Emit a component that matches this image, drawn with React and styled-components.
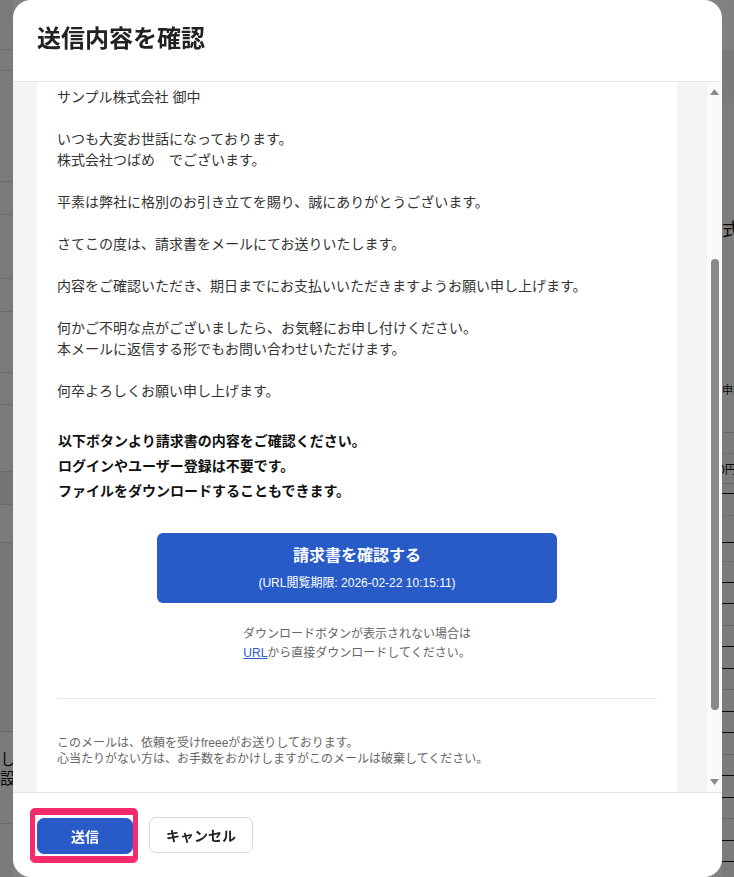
import React from "react";
import styled, { createGlobalStyle } from "styled-components";

const FONT = `"Liberation Sans", "Noto Sans CJK JP", "Noto Sans", sans-serif`;

const GlobalStyle = createGlobalStyle`
  * { box-sizing: border-box; }
  html, body { margin: 0; padding: 0; background: #f2f2f2; }
  body { font-family: ${FONT}; color: #333; overflow: hidden; }
`;

/* ---------- page behind the dialog ---------- */

const Page = styled.div`
  display: flex;
  width: 100%;
  height: 877px;
  background: #f2f2f2;
  overflow: hidden;
`;

const SideColumn = styled.div`
  width: ${(p) => p.$w}px;
  flex: none;
  display: flex;
  flex-direction: column;
`;

const MainColumn = styled.div`
  flex: 1;
  background: #fff;
`;

const PageRow = styled.div`
  flex: none;
  height: ${(p) => p.$h}px;
  background: ${(p) => p.$bg || "#f2f2f2"};
  border-bottom: ${(p) => (p.$line ? `1px solid ${p.$line}` : "none")};
  padding-top: ${(p) => p.$pt || 0}px;
  font-size: ${(p) => p.$fs || 14}px;
  line-height: 1.2;
  color: #111;
  white-space: nowrap;
  text-indent: ${(p) => p.$indent || 0}px;
`;

const leftRows = [
  { h: 50, line: "#d0d0d0" },
  { h: 21, line: "#d0d0d0" },
  { h: 111, line: "#d0d0d0" },
  { h: 33, line: "#d0d0d0" },
  { h: 64, line: "#d0d0d0" },
  { h: 33, line: "#d0d0d0" },
  { h: 61, line: "#d0d0d0" },
  { h: 32, line: "#d0d0d0" },
  { h: 67, line: "#d0d0d0" },
  { h: 33, bg: "#e6e6e6", line: "#d0d0d0" },
  { h: 38, line: "#d0d0d0" },
  { h: 189, bg: "#e9e9e9", line: "#d0d0d0" },
  { h: 92, line: "#d0d0d0", pt: 18, text: "しい\n設定", fs: 16 },
  { h: 53 },
];

const rightRows = [
  { h: 50, bg: "#fdfdfd" },
  { h: 53, bg: "#efefef" },
  { h: 117, bg: "#f6f6f6" },
  { h: 40, bg: "#f6f6f6", text: "式", fs: 18 },
  { h: 173, bg: "#f6f6f6", line: "#c8c8c8", pt: 124, text: "申請", fs: 11 },
  { h: 21, line: "#d8d8d8" },
  { h: 30, line: "#c8c8c8", pt: 9, text: "0円", fs: 12, indent: -4 },
  { h: 10, line: "#111" },
  { h: 22, line: "#d8d8d8" },
  { h: 27, line: "#111" },
  { h: 19, line: "#d8d8d8" },
  { h: 21, line: "#111" },
  ...Array.from({ length: 14 }, (_, i) => ({ h: i % 2 ? 22 : 21, line: i % 3 === 1 ? "#c8c8c8" : "#111" })),
];

const renderRows = (rows) =>
  rows.map((r, i) => {
    const parts = r.text ? r.text.split("\n") : [];
    return (
      <PageRow key={i} $h={r.h} $bg={r.bg} $line={r.line} $pt={r.pt} $fs={r.fs} $indent={r.indent}>
        {parts.map((t, j) => (
          <React.Fragment key={j}>
            {t}
            {j < parts.length - 1 && <br />}
          </React.Fragment>
        ))}
      </PageRow>
    );
  });

const Dim = styled.div`
  position: fixed;
  inset: 0;
  background: rgba(0, 0, 0, 0.49);
`;

/* ---------- dialog ---------- */

const Dialog = styled.section`
  position: fixed;
  left: 13px;
  top: 0;
  width: 709px;
  height: 877px;
  background: #fff;
  border-radius: 18px;
  overflow: hidden;
  display: flex;
  flex-direction: column;
`;

const DialogHeader = styled.header`
  flex: none;
  height: 82px;
  padding: 0 24px 3px;
  display: flex;
  align-items: center;
  border-bottom: 1px solid #e5e5e5;
`;

const Title = styled.h1`
  margin: 0;
  font-size: 24px;
  line-height: 1;
  font-weight: 700;
  color: #222;
`;

const DialogBody = styled.div`
  flex: 1;
  min-height: 0;
  display: flex;
`;

const Viewport = styled.div`
  flex: 1;
  min-width: 0;
  background: #f5f4f5;
  padding-left: 24px;
  overflow: hidden;
`;

const MailCard = styled.article`
  width: 640px;
  min-height: 100%;
  background: #fff;
  padding: 5px 20px 40px;
`;

const Para = styled.p`
  margin: 0 0 21px;
  font-size: 14px;
  line-height: 21px;
  color: #333;
  &:last-of-type { margin-bottom: 0; }
`;

const Notice = styled.p`
  margin: 27px 0 0;
  padding-left: 1px;
  font-size: 14px;
  line-height: 25px;
  font-weight: 700;
  color: #111;
`;

const CtaButton = styled.a`
  margin: 29px auto 0;
  width: 400px;
  height: 70px;
  padding: 12px 0;
  border-radius: 6px;
  background: #285bc8;
  color: #fff;
  text-decoration: none;
  display: flex;
  flex-direction: column;
  align-items: center;
  gap: 8px;
`;

const CtaTitle = styled.span`
  font-size: 16px;
  line-height: 22px;
  font-weight: 700;
`;

const CtaSub = styled.span`
  font-size: 12px;
  line-height: 16px;
`;

const HelpText = styled.p`
  margin: 22px 0 0;
  text-align: center;
  font-size: 12px;
  line-height: 19px;
  color: #666;
`;

const InlineLink = styled.a`
  color: #2a5bc8;
  text-decoration: underline;
`;

const Rule = styled.hr`
  margin: 35px 0 0;
  border: 0;
  height: 1px;
  background: #e6e6e6;
`;

const SmallPrint = styled.p`
  margin: 36px 0 0;
  font-size: 12px;
  line-height: 16px;
  color: #666;
`;

/* scrollbar drawn beside the mail viewport */
const Rail = styled.div`
  flex: none;
  width: 15px;
  background: #fafafa;
  display: flex;
  flex-direction: column;
`;

const RailArrow = styled.div`
  flex: none;
  height: 20px;
  display: flex;
  align-items: center;
  justify-content: center;
`;

const RailTrack = styled.div`
  flex: 1;
  display: flex;
  flex-direction: column;
  align-items: center;
`;

const Thumb = styled.div`
  width: 8px;
  border-radius: 4px;
  background: #8a8a8a;
`;

const Arrow = ({ down }) => (
  <svg width="9" height="6" viewBox="0 0 9 6">
    <polygon points={down ? "0,0 9,0 4.5,6" : "0,6 9,6 4.5,0"} fill="#8a8a8a" />
  </svg>
);

const Scrollbar = ({ viewHeight, contentHeight, scrollTop, trackHeight }) => {
  const thumbH = (trackHeight * viewHeight) / contentHeight;
  const thumbTop = (trackHeight * scrollTop) / contentHeight;
  return (
    <Rail>
      <RailArrow>
        <Arrow />
      </RailArrow>
      <RailTrack>
        <Thumb style={{ marginTop: thumbTop, height: thumbH }} />
      </RailTrack>
      <RailArrow>
        <Arrow down />
      </RailArrow>
    </Rail>
  );
};

const DialogFooter = styled.footer`
  flex: none;
  height: 85px;
  border-top: 1px solid #e5e5e5;
  padding: 0 17px;
  display: flex;
  align-items: center;
  gap: 11px;
`;

const Highlight = styled.div`
  border-style: solid;
  border-color: #f72b6b;
  border-width: 7px 5px 7px 5px;
  border-radius: 5px;
  padding: 3px 0 2px 2px;
  background: #fff;
  display: flex;
`;

const Button = styled.button`
  height: 36px;
  width: ${(p) => p.$w}px;
  border-radius: 7px;
  font-family: ${FONT};
  font-size: 14px;
  font-weight: 700;
  cursor: pointer;
  border: 1px solid ${(p) => (p.$primary ? "#285bc8" : "#d9d9d9")};
  background: ${(p) => (p.$primary ? "#285bc8" : "#fff")};
  color: ${(p) => (p.$primary ? "#fff" : "#222")};
`;

const paragraphs = [
  ["サンプル株式会社 御中"],
  ["いつも大変お世話になっております。", "株式会社つばめ　でございます。"],
  ["平素は弊社に格別のお引き立てを賜り、誠にありがとうございます。"],
  ["さてこの度は、請求書をメールにてお送りいたします。"],
  ["内容をご確認いただき、期日までにお支払いいただきますようお願い申し上げます。"],
  ["何かご不明な点がございましたら、お気軽にお申し付けください。", "本メールに返信する形でもお問い合わせいただけます。"],
  ["何卒よろしくお願い申し上げます。"],
];

const Lines = ({ lines }) =>
  lines.map((l, i) => (
    <React.Fragment key={i}>
      {l}
      {i < lines.length - 1 && <br />}
    </React.Fragment>
  ));

export default function App() {
  return (
    <>
      <GlobalStyle />
      <Page>
        <SideColumn $w={13}>{renderRows(leftRows)}</SideColumn>
        <MainColumn />
        <SideColumn $w={12}>{renderRows(rightRows)}</SideColumn>
      </Page>
      <Dim />
      <Dialog role="dialog" aria-label="送信内容を確認">
        <DialogHeader>
          <Title>送信内容を確認</Title>
        </DialogHeader>
        <DialogBody>
          <Viewport>
            <MailCard>
              {paragraphs.map((p, i) => (
                <Para key={i}>
                  <Lines lines={p} />
                </Para>
              ))}
              <Notice>
                以下ボタンより請求書の内容をご確認ください。
                <br />
                ログインやユーザー登録は不要です。
                <br />
                ファイルをダウンロードすることもできます。
              </Notice>
              <CtaButton href="#">
                <CtaTitle>請求書を確認する</CtaTitle>
                <CtaSub>(URL閲覧期限: 2026-02-22 10:15:11)</CtaSub>
              </CtaButton>
              <HelpText>
                ダウンロードボタンが表示されない場合は
                <br />
                <InlineLink href="#">URL</InlineLink>から直接ダウンロードしてください。
              </HelpText>
              <Rule />
              <SmallPrint>
                このメールは、依頼を受けfreeeがお送りしております。
                <br />
                心当たりがない方は、お手数をおかけしますがこのメールは破棄してください。
              </SmallPrint>
            </MailCard>
          </Viewport>
          <Scrollbar viewHeight={710} contentHeight={1055} scrollTop={247} trackHeight={670} />
        </DialogBody>
        <DialogFooter>
          <Highlight>
            <Button $primary $w={96}>送信</Button>
          </Highlight>
          <Button $w={104}>キャンセル</Button>
        </DialogFooter>
      </Dialog>
    </>
  );
}
